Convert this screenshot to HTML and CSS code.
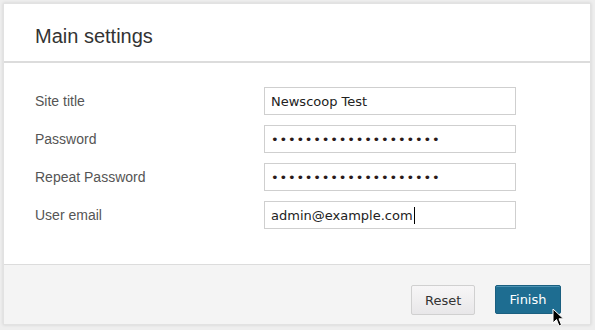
FILE: index.html
```html
<!DOCTYPE html>
<html lang="en">
<head>
  <meta charset="UTF-8">
  <meta name="viewport" content="width=device-width,initial-scale=1.0">
  <title>Main settings</title>
  <link rel="stylesheet" href="styles.css">
</head>
<body>

  <!-- Settings panel -->
  <form class="panel">
    <div class="panel-header">
      <h1>Main settings</h1>
    </div>

    <div class="panel-body">
      <label class="field-label" for="site-title">Site title</label>
      <input class="field-input" id="site-title" type="text" value="Newscoop Test">

      <label class="field-label" for="password">Password</label>
      <input class="field-input" id="password" type="password" value="aaaaaaaaaaaaaaaaaaaa">

      <label class="field-label" for="password2">Repeat Password</label>
      <input class="field-input" id="password2" type="password" value="aaaaaaaaaaaaaaaaaaaa">

      <label class="field-label" for="email">User email</label>
      <div class="field-input fake-input">admin@example.com<span class="caret"></span></div>
    </div>

    <div class="panel-footer">
      <button type="reset" class="btn btn-default">Reset</button>
      <button type="button" class="btn btn-primary">Finish</button>
    </div>
  </form>

  <!-- mouse pointer over the Finish button -->
  <svg class="pointer" width="13" height="20" viewBox="0 0 13 20">
    <path d="M1 1 L1 15 L4.5 11.5 L7 18 L9.5 17 L7 10.8 L11.5 10.8 Z" fill="#000" stroke="#fff" stroke-width="1" stroke-linejoin="round"/>
  </svg>

</body>
</html>
```

FILE: styles.css
```css
* {
  margin: 0;
  padding: 0;
  box-sizing: border-box;
}

body {
  font-family: "Liberation Sans", Arial, sans-serif;
  background-color: #eeeeee;
  padding: 3px 4px 5px 3px;
  position: relative;
  height: 330px;
  overflow: hidden;
}

.panel {
  background: #fff;
  border: 1px solid #e2e2e2;
  box-shadow: 0 0 3px rgba(0, 0, 0, 0.12);
  height: 322px;
  display: flex;
  flex-direction: column;
}

.panel-header {
  height: 59px;
  padding: 8px 31px 0;
  border-bottom: 2px solid #dcdcdc;
  display: flex;
  align-items: center;
}
.panel-header h1 {
  font-size: 20px;
  font-weight: normal;
  color: #333;
}

.panel-body {
  display: grid;
  grid-template-columns: 229px 252px;
  row-gap: 10px;
  align-items: center;
  padding: 24px 31px 35px;
}

.field-label {
  font-size: 14px;
  color: #555;
}

.field-input {
  height: 28px;
  border: 1px solid #cfcfcf;
  border-radius: 0;
  padding: 0 6px;
  font-family: "DejaVu Sans", sans-serif;
  font-size: 13px;
  color: #222;
  background: #fff;
  outline: none;
}
input[type="password"] {
  letter-spacing: 0.8px;
  color: #2a1a1a;
}

.fake-input {
  display: flex;
  align-items: center;
}
.caret {
  width: 1px;
  height: 17px;
  background: #000;
  margin-left: 1px;
}

.panel-footer {
  flex: 1;
  background: #f4f4f4;
  border-top: 1px solid #dcdcdc;
  display: flex;
  justify-content: flex-end;
  align-items: flex-start;
  gap: 20px;
  padding: 20px 29px 0;
}

.btn {
  height: 30px;
  padding: 0 13px;
  font-family: "DejaVu Sans", sans-serif;
  font-size: 13px;
  border-radius: 2px;
  cursor: pointer;
}
.btn-default {
  width: 64px;
  color: #333;
  background: linear-gradient(#f7f6f7, #e8e7e9);
  border: 1px solid #d0d0d0;
}
.btn-primary {
  width: 66px;
  color: #fff;
  background: #1e6d91;
  border: 1px solid #1a5f80;
  box-shadow: inset 0 1px 0 #4d93b3;
  height: 29px;
}

.pointer {
  position: absolute;
  left: 552px;
  top: 308px;
}
```
